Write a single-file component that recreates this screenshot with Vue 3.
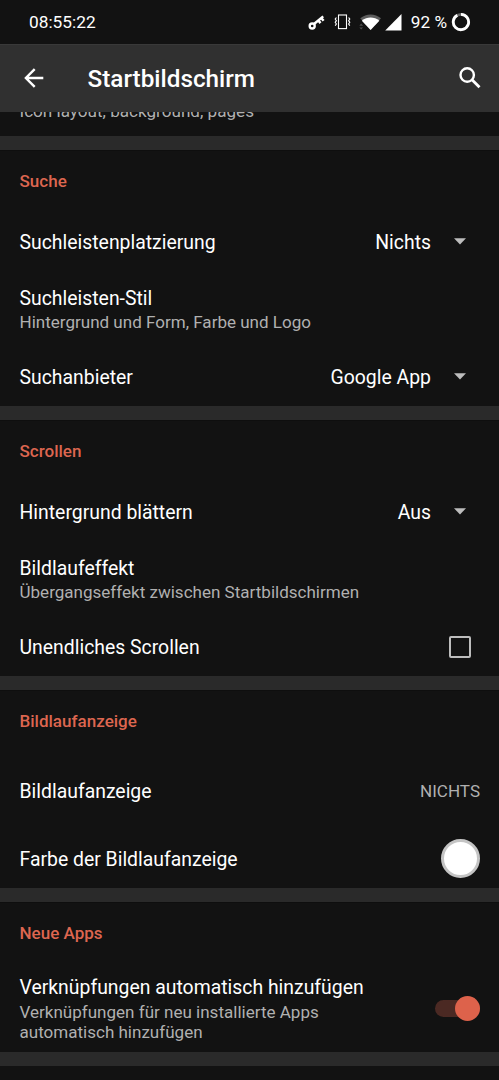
<script setup>
const sections = [
  {
    title: 'Suche',
    size: 'regular',
    rows: [
      { label: 'Suchleistenplatzierung', kind: 'select', value: 'Nichts' },
      { label: 'Suchleisten-Stil', hint: 'Hintergrund und Form, Farbe und Logo' },
      { label: 'Suchanbieter', kind: 'select', value: 'Google App' },
    ],
  },
  {
    title: 'Scrollen',
    size: 'regular',
    rows: [
      { label: 'Hintergrund blättern', kind: 'select', value: 'Aus' },
      { label: 'Bildlaufeffekt', hint: 'Übergangseffekt zwischen Startbildschirmen' },
      { label: 'Unendliches Scrollen', kind: 'checkbox' },
    ],
  },
  {
    title: 'Bildlaufanzeige',
    size: 'roomy',
    rows: [
      { label: 'Bildlaufanzeige', kind: 'text', value: 'NICHTS' },
      { label: 'Farbe der Bildlaufanzeige', kind: 'color' },
    ],
  },
  {
    title: 'Neue Apps',
    size: 'tall',
    rows: [
      {
        label: 'Verknüpfungen automatisch hinzufügen',
        hint: 'Verknüpfungen für neu installierte Apps automatisch hinzufügen',
        kind: 'switch',
      },
    ],
  },
]
</script>

<template>
  <div class="screen">
    <div class="status">
      <span class="clock">08:55:22</span>
      <svg class="key" width="17" height="17" viewBox="0 0 17 17" fill="none" stroke="#fff">
        <circle cx="4.2" cy="12" r="2.5" stroke-width="2.4" />
        <path d="M6 10L15.2 2.4M10.3 6.4l2.2 2.7M13.2 4l2.4 2.8" stroke-width="2.5" />
      </svg>
      <svg class="vibrate" width="17" height="16" viewBox="0 0 17 16" fill="none" stroke="#fff">
        <rect x="4.5" y="1" width="8" height="13.6" stroke-width="1.1" />
        <path d="M2.4 3.5l-1.2 1.6 1.2 1.6-1.2 1.6 1.2 1.6-1.2 1.8M14.6 3.5l1.2 1.6-1.2 1.6 1.2 1.6-1.2 1.6 1.2 1.8" stroke-width="1.1" />
      </svg>
      <svg class="wifi" width="23" height="18" viewBox="0 0 23 18">
        <path d="M1.2 5.2C7.2.1 16 .1 22 5.2L11.6 17z" fill="#5c5c5c" />
        <path d="M2.8 7.8c5.3-4.3 12.3-4.3 17.6 0L11.6 17z" fill="#fff" />
        <path d="M.3 12.8l1.9-2.2 1.9 2.2zM.3 14.4l1.9 2.2 1.9-2.2z" fill="#4b4b4b" />
      </svg>
      <svg class="signal" width="17" height="17" viewBox="0 0 17 17"><path d="M16.5 0v16.4H.2z" fill="#fff" /></svg>
      <span class="percent">92 %</span>
      <svg class="battery" width="20" height="20" viewBox="0 0 20 20" fill="none" stroke-width="2.8">
        <circle cx="10" cy="10" r="7.7" stroke="#666" />
        <path d="M10 2.3A7.7 7.7 0 1 1 6.3 3.2" stroke="#fff" />
      </svg>
    </div>

    <header class="bar">
      <svg class="back" width="20" height="20" viewBox="0 0 20 20" fill="none" stroke="#fff" stroke-width="2.4">
        <path d="M19.3 10H2.2M10.7 1.2L1.9 10l8.8 8.8" />
      </svg>
      <h1>Startbildschirm</h1>
      <svg class="search" width="22" height="22" viewBox="0 0 22 22" fill="none" stroke="#fff">
        <circle cx="8.2" cy="8" r="6.7" stroke-width="2.4" />
        <path d="M13 12.8l7.5 7.5" stroke-width="2.9" />
      </svg>
    </header>

    <div class="previous"><p>Icon layout, background, pages</p></div>

    <section v-for="s in sections" :key="s.title" :class="s.size">
      <h2>{{ s.title }}</h2>
      <div v-for="r in s.rows" :key="r.label" class="row" :class="{ single: !r.hint }">
        <div class="copy">
          <div class="label">{{ r.label }}</div>
          <div v-if="r.hint" class="hint">{{ r.hint }}</div>
        </div>
        <template v-if="r.kind === 'select'">
          <span class="value">{{ r.value }}</span>
          <svg class="caret" width="12" height="7" viewBox="0 0 12 7"><path d="M0 .3h12L6 6.5z" fill="#bdbdbd" /></svg>
        </template>
        <span v-else-if="r.kind === 'text'" class="tag">{{ r.value }}</span>
        <span v-else-if="r.kind === 'checkbox'" class="checkbox"></span>
        <span v-else-if="r.kind === 'color'" class="swatch"></span>
        <span v-else-if="r.kind === 'switch'" class="switch"><span class="thumb"></span></span>
      </div>
    </section>
  </div>
</template>

<style>
body { background: #121212; }
</style>

<style scoped>
.screen {
  width: 499px;
  height: 1080px;
  overflow: hidden;
  background: #121212;
  color: #fff;
  font-family: Roboto, "Noto Sans", sans-serif;
  font-size: 19.4px;
}
.status {
  display: flex;
  align-items: center;
  box-sizing: border-box;
  height: 44px;
  padding: 0 28.5px 0 29px;
  font-size: 17.2px;
}
.status svg { flex: none; }
.clock { margin-right: auto; font-size: 17.3px; }
.key { margin-right: 9px; }
.vibrate { margin-right: 8px; }
.wifi { margin-right: 3px; }
.signal { margin-right: 9px; }
.percent { margin-right: 3.5px; white-space: nowrap; }
.bar {
  display: flex;
  align-items: center;
  box-sizing: border-box;
  height: 68px;
  padding: 0 18.5px 1px 24px;
  background: #303030;
  border-top: 1px solid #393939;
}
h1 {
  flex: 1;
  margin: 2px 0 0 43.5px;
  font-size: 24.3px;
  line-height: 30px;
  font-weight: 500;
}
.previous {
  height: 24px;
  overflow: hidden;
  border-bottom: 14px solid #2a2a2a;
}
.previous p {
  margin: -11px 0 0 19.5px;
  color: #b0b0b0;
  font-size: 17.1px;
  line-height: 20px;
}
section {
  box-sizing: border-box;
  height: 270px;
  overflow: hidden;
  border-top: 1px solid #0e0e0e;
  border-bottom: 14px solid #2a2a2a;
}
h2 {
  box-sizing: border-box;
  height: 57px;
  margin: 0;
  padding: 20px 0 0 19.5px;
  color: #dd6650;
  font-size: 17.05px;
  line-height: 20px;
  font-weight: 500;
}
.row {
  display: flex;
  align-items: center;
  box-sizing: border-box;
  height: 68px;
  padding: 0 19px 0 19.5px;
}
.copy { flex: 1; }
.label { line-height: 24px; }
.single .copy { padding-top: 2px; }
.hint {
  color: #b0b0b0;
  font-size: 17.05px;
  line-height: 20px;
  margin: 1px 0;
}
.regular .row:last-child { margin-top: -1px; }
.roomy { height: 212px; }
.roomy h2 { height: 66px; }
.tall { height: 164px; }
.tall .row { height: 97px; }
.tall .copy { max-width: 350px; margin-right: auto; }
.tall .hint { margin: 2px 0 0; }
.caret { margin: 0 14px 1px 23px; }
.tag { color: #b0b0b0; font-size: 17.05px; }
.checkbox {
  box-sizing: border-box;
  width: 22px;
  height: 22px;
  margin-right: 9px;
  border: 2px solid #bdbdbd;
  border-radius: 2px;
}
.swatch {
  box-sizing: border-box;
  width: 39px;
  height: 39px;
  margin-bottom: 1px;
  border: 3px solid #c4c4c4;
  border-radius: 50%;
  background: #fff;
}
.switch {
  display: flex;
  align-items: center;
  justify-content: flex-end;
  width: 45px;
  height: 17px;
  border-radius: 9px;
  background: #4b2923;
}
.thumb {
  flex: none;
  width: 25px;
  height: 25px;
  border-radius: 50%;
  background: #dd624b;
}
</style>
